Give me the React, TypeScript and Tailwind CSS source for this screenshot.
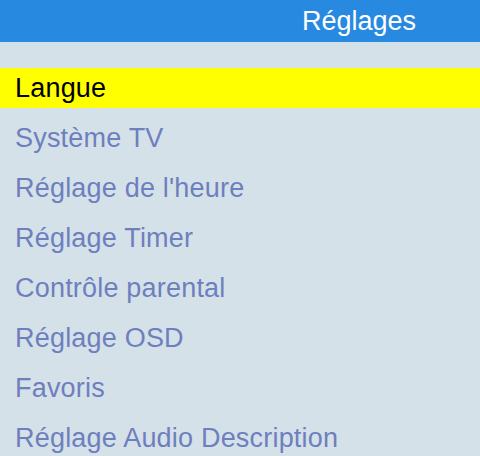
export default function App() {
  const items = [
    "Système TV",
    "Réglage de l'heure",
    "Réglage Timer",
    "Contrôle parental",
    "Réglage OSD",
    "Favoris",
    "Réglage Audio Description",
  ];
  return (
    <div className="w-[480px] h-[456px] overflow-hidden bg-[#d5e1e9]" style={{ fontFamily: '"Liberation Sans", Arial, sans-serif' }}>
      <div className="h-[42px] bg-[#2889e0] flex items-center justify-end pr-[64px]">
        <span className="text-white text-[27px] leading-none">Réglages</span>
      </div>
      <div className="pt-[26px] flex flex-col gap-[10px]">
        <div className="h-[40px] bg-[#ffff00] flex items-center pl-[15px] text-[27px] leading-none tracking-[0.2px] text-black">Langue</div>
        {items.map((t) => (
          <div key={t} className="h-[40px] flex items-center pl-[15px] text-[27px] leading-none tracking-[0.2px] text-[#6e7fbe]">{t}</div>
        ))}
      </div>
    </div>
  );
}
